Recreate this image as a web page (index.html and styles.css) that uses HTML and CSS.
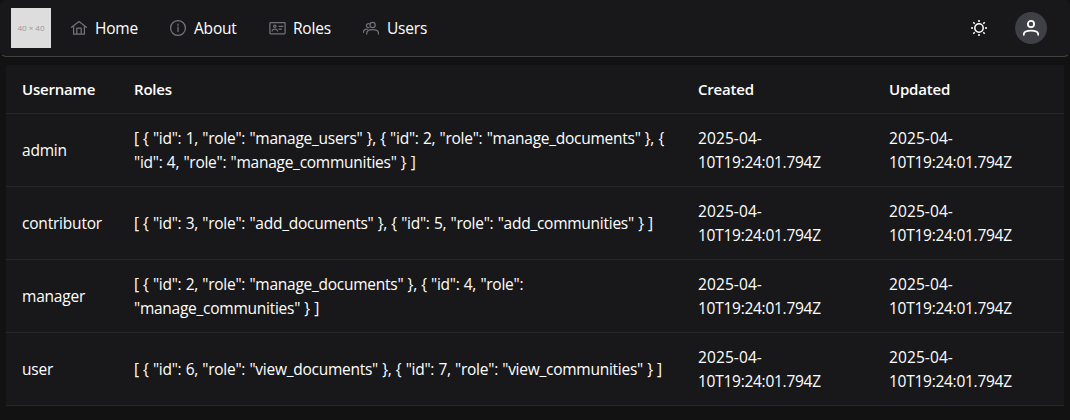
FILE: index.html
```html
<!DOCTYPE html>
<html lang="en">
<head>
<meta charset="utf-8">
<title>Users</title>
<link rel="stylesheet" href="styles.css">
</head>
<body>
<nav class="menubar">
  <div class="logo">40 × 40</div>
  <a class="item item-home"><svg class="icon" viewBox="0 0 16 16"><path d="M.6 7.3 8 1.6l7.4 5.7M2.6 6v8.2h10.8V6M5.8 14V8h4.4v6"/></svg><span>Home</span></a>
  <a class="item item-about"><svg class="icon" viewBox="0 0 16 16"><circle cx="8" cy="8" r="7.4"/><path d="M8 7v4.6M8 4.2v1.3"/></svg><span>About</span></a>
  <a class="item item-roles"><svg class="icon icon-card" viewBox="0 0 17 16"><rect x=".9" y="2.6" width="15.2" height="11.2" rx=".8"/><circle cx="5.8" cy="6.2" r="1.2"/><path d="M3.1 11c.2-1.4 1.1-2 2.7-2s2.5.6 2.7 2M10 6.4h3.8M10 9.1h2.6"/></svg><span>Roles</span></a>
  <a class="item item-users"><svg class="icon" viewBox="0 0 16 16"><circle cx="9.6" cy="5" r="2.6"/><path d="M3.7 14v-.7c0-2.4 2-3.6 5.9-3.6s5.9 1.2 5.9 3.6v.7M6 3.7a2 2 0 1 0-.2 3.9M.5 12.3v-.5c0-1.6 1.1-2.5 3.8-2.7"/></svg><span>Users</span></a>
  <div class="actions">
    <svg class="sun" viewBox="0 0 16 16"><circle cx="8" cy="8" r="4.2"/><path d="M8 0v2M8 14v2M0 8h2M14 8h2M2.3 2.3l1.4 1.4M12.3 12.3l1.4 1.4M2.3 13.7l1.4-1.4M12.3 3.7l1.4-1.4"/></svg>
    <div class="avatar"><svg class="person" viewBox="0 0 16 16"><circle cx="8" cy="4" r="3.1"/><path d="M.8 14.8v-.4c0-2.5 2.4-3.7 7.2-3.7s7.2 1.2 7.2 3.7v.4"/></svg></div>
  </div>
</nav>
<table class="users">
  <colgroup><col class="c-name"><col class="c-roles"><col class="c-date"><col class="c-date"></colgroup>
  <thead><tr><th>Username</th><th>Roles</th><th>Created</th><th>Updated</th></tr></thead>
  <tbody>
    <tr><td>admin</td><td class="json">[ { "id": 1, "role": "manage_users" }, { "id": 2, "role": "manage_documents" }, {<br>"id": 4, "role": "manage_communities" } ]</td><td class="date"><span class="day">2025-04-</span><br>10T19:24:01.794Z</td><td class="date"><span class="day">2025-04-</span><br>10T19:24:01.794Z</td></tr>
    <tr><td>contributor</td><td class="json">[ { "id": 3, "role": "add_documents" }, { "id": 5, "role": "add_communities" } ]</td><td class="date"><span class="day">2025-04-</span><br>10T19:24:01.794Z</td><td class="date"><span class="day">2025-04-</span><br>10T19:24:01.794Z</td></tr>
    <tr><td>manager</td><td class="json">[ { "id": 2, "role": "manage_documents" }, { "id": 4, "role":<br>"manage_communities" } ]</td><td class="date"><span class="day">2025-04-</span><br>10T19:24:01.794Z</td><td class="date"><span class="day">2025-04-</span><br>10T19:24:01.794Z</td></tr>
    <tr><td>user</td><td class="json">[ { "id": 6, "role": "view_documents" }, { "id": 7, "role": "view_communities" } ]</td><td class="date"><span class="day">2025-04-</span><br>10T19:24:01.794Z</td><td class="date"><span class="day">2025-04-</span><br>10T19:24:01.794Z</td></tr>
  </tbody>
</table>
</body>
</html>
```
FILE: styles.css
```css
* { box-sizing: border-box; }
body {
  margin: 0;
  background: #121212;
  color: #fff;
  font: 15.5px/24px "Segoe UI", "Open Sans", "Noto Sans", sans-serif;
}
.menubar {
  display: flex;
  align-items: center;
  height: 57px;
  padding: 0 22px 0 10px;
  background: #18181b;
  border: 1px solid #3f3f46;
  border-top: 0;
  border-left-color: #18181b;
  border-right-color: #18181b;
  border-radius: 6px;
}
.logo {
  width: 40px;
  height: 40px;
  margin-right: 20px;
  background: #ddd;
  color: #999;
  font: 500 8px/40px "Open Sans", sans-serif;
  text-align: center;
}
.item {
  display: flex;
  align-items: center;
  gap: 8px;
  letter-spacing: -0.2px;
  white-space: nowrap;
}
.item-home, .item-about { width: 99px; }
.item-roles { width: 94px; }
.icon {
  width: 16px;
  height: 16px;
  flex: none;
  fill: none;
  stroke: #71717a;
  stroke-width: 1.25;
  stroke-linecap: round;
  stroke-linejoin: round;
}
.icon-card { width: 17px; }
.item-roles { gap: 7px; }
.actions {
  display: flex;
  align-items: center;
  gap: 28px;
  margin-left: auto;
}
.sun, .person {
  width: 16px;
  height: 16px;
  fill: none;
  stroke: #fff;
  stroke-width: 1.5;
}
.person {
  stroke-width: 1.8;
  stroke-linecap: round;
}
.avatar {
  display: flex;
  align-items: center;
  justify-content: center;
  width: 32px;
  height: 32px;
  border-radius: 50%;
  background: #3f3f46;
}
.users {
  width: 1058px;
  margin: 8px 6px 0;
  table-layout: fixed;
  border-collapse: separate;
  border-spacing: 0;
  background: #18181b;
}
.c-name { width: 112px; }
.c-roles { width: 564px; }
.c-date { width: 191px; }
.users th, .users td {
  padding: 12px 16px;
  border-bottom: 1px solid #27272a;
  letter-spacing: -0.2px;
  text-align: left;
  white-space: nowrap;
}
.users th {
  font-size: 15px;
  font-weight: 600;
}
.users .json {
  letter-spacing: -0.26px;
  word-spacing: 0.5px;
}
.users .date { letter-spacing: -0.27px; }
.day { letter-spacing: 0.1px; }
```
